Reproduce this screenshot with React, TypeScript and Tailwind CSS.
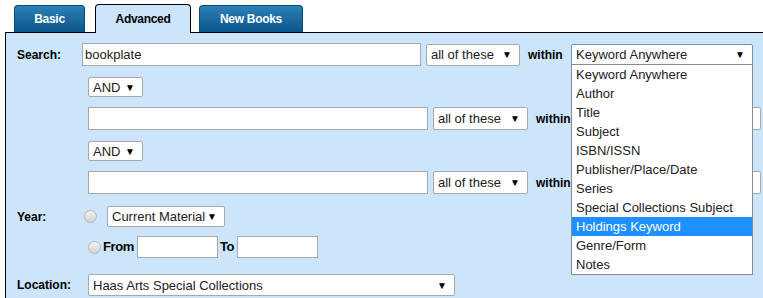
import React from "react";

const font = { fontFamily: '"Liberation Sans", Arial, sans-serif' };

function Select({ value, className = "", focus = false }: { value: string; className?: string; focus?: boolean }) {
  return (
    <div
      className={`flex items-center justify-between bg-white rounded-[2px] border pl-[4px] pr-[7px] pt-[1px] text-[13px] text-[#222] ${
        focus ? "border-[#6f95c2]" : "border-[#a9a9a9]"
      } ${className}`}
    >
      <span className="whitespace-nowrap">{value}</span>
      <span className="text-[10px] text-black leading-none">▼</span>
    </div>
  );
}

function TextBox({ value = "", className = "" }: { value?: string; className?: string }) {
  return (
    <div className={`flex items-center bg-white border border-[#a9a9a9] pl-[2px] pt-[1px] text-[13px] text-[#222] ${className}`}>
      {value}
    </div>
  );
}

function Radio() {
  return (
    <div className="w-[13px] h-[13px] rounded-full border border-[#b5b5b5] bg-gradient-to-b from-[#f4f4f4] to-[#d4d4d4]" />
  );
}

const options = [
  "Keyword Anywhere",
  "Author",
  "Title",
  "Subject",
  "ISBN/ISSN",
  "Publisher/Place/Date",
  "Series",
  "Special Collections Subject",
  "Holdings Keyword",
  "Genre/Form",
  "Notes",
];

export default function App() {
  return (
    <div className="relative w-[763px] h-[298px] overflow-hidden bg-white" style={font}>
      {/* Tabs */}
      <div className="flex items-end h-[32px] pl-[14px]">
        <div className="w-[71px] h-[27px] rounded-t-[4px] bg-gradient-to-b from-[#2b80b9] to-[#0c5587] border border-[#0b4b78] border-b-0 flex items-center justify-center text-white font-bold text-[12px] tracking-[-0.3px]">
          Basic
        </div>
        <div className="relative z-10 ml-[10px] w-[96px] h-[29px] -mb-px rounded-t-[4px] bg-[#cde5fb] border border-black border-b-0 flex items-center justify-center text-black font-bold text-[12px] tracking-[-0.3px]">
          Advanced
        </div>
        <div className="ml-[8px] w-[104px] h-[27px] rounded-t-[4px] bg-gradient-to-b from-[#2b80b9] to-[#0c5587] border border-[#0b4b78] border-b-0 flex items-center justify-center text-white font-bold text-[12px] tracking-[-0.3px]">
          New Books
        </div>
      </div>

      {/* Panel */}
      <div className="ml-[5px] w-[800px] h-[300px] border-t border-l border-black bg-[#cde5fb] pl-[11px] text-[12px] text-black">
        {/* Search row */}
        <div className="flex items-center mt-[10px] h-[23px]">
          <span className="w-[65px] font-bold">Search:</span>
          <TextBox value="bookplate" className="w-[339px] h-[23px]" />
          <Select value="all of these" className="ml-[5px] w-[94px] h-[22px]" />
          <span className="w-[51px] pl-[8px] font-bold">within</span>
          <Select value="Keyword Anywhere" focus className="w-[182px] h-[22px]" />
        </div>

        {/* AND */}
        <div className="flex items-center mt-[11px] h-[20px] pl-[71px]">
          <Select value="AND" className="w-[55px] h-[20px]" />
        </div>

        {/* Row 2 */}
        <div className="flex items-center mt-[10px] h-[23px] pl-[71px]">
          <TextBox className="w-[340px] h-[23px]" />
          <Select value="all of these" className="ml-[5px] w-[95px] h-[23px]" />
          <span className="w-[51px] pl-[8px] font-bold">within</span>
          <Select value="" className="w-[182px] h-[23px]" />
        </div>

        {/* AND */}
        <div className="flex items-center mt-[11px] h-[20px] pl-[71px]">
          <Select value="AND" className="w-[55px] h-[20px]" />
        </div>

        {/* Row 3 */}
        <div className="flex items-center mt-[10px] h-[23px] pl-[71px]">
          <TextBox className="w-[340px] h-[23px]" />
          <Select value="all of these" className="ml-[5px] w-[95px] h-[23px]" />
          <span className="w-[51px] pl-[8px] font-bold">within</span>
          <Select value="" className="w-[182px] h-[23px]" />
        </div>

        {/* Year */}
        <div className="flex items-center mt-[12px] h-[21px]">
          <span className="w-[67px] font-bold">Year:</span>
          <Radio />
          <Select value="Current Material" className="ml-[10px] w-[118px] h-[21px]" />
        </div>

        {/* From / To */}
        <div className="flex items-center mt-[9px] h-[22px] pl-[71px]">
          <Radio />
          <span className="ml-[2px] font-bold text-[13px] tracking-[-0.4px]">From</span>
          <TextBox className="ml-[3px] w-[81px] h-[22px]" />
          <span className="ml-[2px] font-bold text-[13px] tracking-[-0.4px]">To</span>
          <TextBox className="ml-[3px] w-[81px] h-[22px]" />
        </div>

        {/* Location */}
        <div className="flex items-center mt-[16px] h-[22px]">
          <span className="w-[71px] font-bold">Location:</span>
          <Select value="Haas Arts Special Collections" className="w-[367px] h-[22px]" />
        </div>
      </div>

      {/* Open dropdown list */}
      <div className="absolute left-[571px] top-[64px] w-[182px] bg-white border border-[#8a8a8a] text-[13px] text-[#222]">
        {options.map((o) => (
          <div
            key={o}
            className={`h-[19px] leading-[18px] pt-[1px] pl-[4px] whitespace-nowrap ${
              o === "Holdings Keyword" ? "bg-[#1e90ff] text-white" : ""
            }`}
          >
            {o}
          </div>
        ))}
      </div>
    </div>
  );
}
